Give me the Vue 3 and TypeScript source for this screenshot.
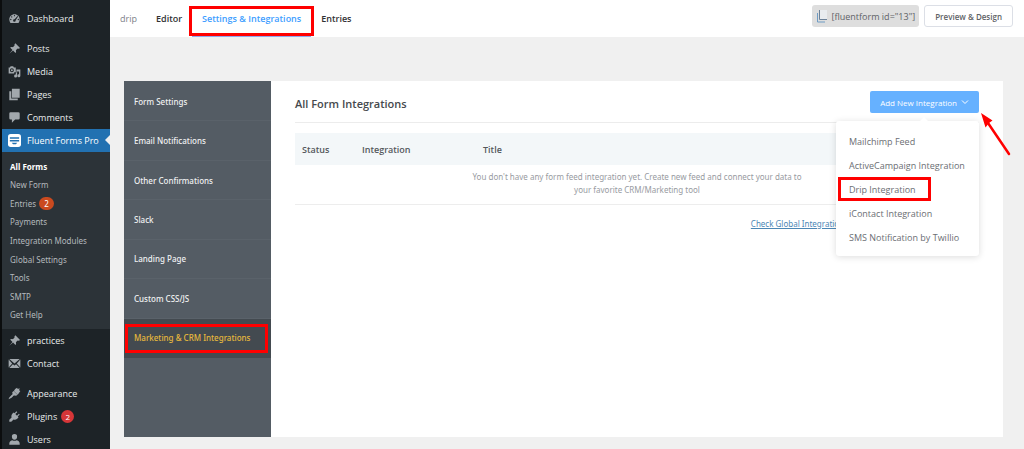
<script setup lang="ts">
import { ref } from 'vue'

interface MenuItem {
  label: string
  icon: string
  badge?: number
  spaced?: boolean
}

const topMenu: MenuItem[] = [
  { label: 'Dashboard', icon: 'dashboard' },
  { label: 'Posts', icon: 'pin', spaced: true },
  { label: 'Media', icon: 'media' },
  { label: 'Pages', icon: 'pages' },
  { label: 'Comments', icon: 'comment' },
]
const subMenu: { label: string; badge?: number }[] = [
  { label: 'All Forms' },
  { label: 'New Form' },
  { label: 'Entries', badge: 2 },
  { label: 'Payments' },
  { label: 'Integration Modules' },
  { label: 'Global Settings' },
  { label: 'Tools' },
  { label: 'SMTP' },
  { label: 'Get Help' },
]
const bottomMenu: MenuItem[] = [
  { label: 'practices', icon: 'pin' },
  { label: 'Contact', icon: 'mail' },
  { label: 'Appearance', icon: 'brush', spaced: true },
  { label: 'Plugins', icon: 'plug', badge: 2 },
  { label: 'Users', icon: 'user' },
]
const icons: Record<string, string> = {
  dashboard:
    'M3.8 17h12.4c1.2-1.6 1.8-3.4 1.8-5.4C18 7 14.5 3.500 10 3.500S2 7 2 11.600c0 2 .6 3.800 1.800 5.400zM10 4.700a1 1 0 1 1 0 2 1 1 0 0 1 0-2zM5.700 6.500a1 1 0 1 1 0 2 1 1 0 0 1 0-2zM14.600 6.300l.9.8-3.700 5.600a2 2 0 1 1-1.600-1.500zM4.300 10.500a1 1 0 1 1 0 2 1 1 0 0 1 0-2zM15.900 10.500a1 1 0 1 1 0 2 1 1 0 0 1 0-2z',
  pin: 'M10.400 3l1-1 7.100 7.100-1 1c-1.300.4-2.100.2-2.800-.2l-2.600 2.600c.6 1.800.4 3.200-.6 4.300l-3.700-3.700L2 18l4.900-5.800-3.700-3.700c1.100-1 2.500-1.200 4.300-.6L10.100 5.300c-.4-.7-.3-1.600.3-2.300z',
  media:
    'M1 4h2l1-2h4l1 2h3v7H9.500v2H1zM6 5a3 3 0 1 0 0 6 3 3 0 0 0 0-6zM6 6.500a1.500 1.500 0 1 1 0 3 1.500 1.500 0 0 1 0-3zM13 7h6v9.500a2.300 2.300 0 1 1-2-2.200V10h-3v7a2.300 2.300 0 1 1-2-2.200V12h1z',
  pages: 'M6 1h12v14H6zM2 5h3v11h10v3H2z',
  comment: 'M4 2h12q2 0 2 2v7q0 2-2 2h-5l-5 5v-5H4q-2 0-2-2V4q0-2 2-2z',
  mail: 'M2 3h16l-8 7zM1 4l5.500 6L1 16zM19 4v12l-5.500-6zM7.500 11l2.500 2 2.500-2 5.500 6H2z',
  brush:
    'M11 3l3-2 1 2 3-1-1 3 2 1-4 6-6-6zM8.500 6l6 6-2 1.500-3-.5c-2 .5-2 2-4 3.500L1 19c.5-3 2-4 3.500-5.500S7 12 7 10.500L6.500 8z',
  plug: 'M13 2l1.300 1.300-3 3 2.500 2.500 3-3L18 7l-3 3 1.200 1.200c-2 3-4.500 4.500-7.700 3.300L5 18H2v-3l3.500-3.500C4.500 8.500 6 5.800 8.800 3.800L10 5z',
  user: 'M10 1.500a4 4 0 0 1 4 4.300c0 2.500-1.800 4.700-4 4.700s-4-2.200-4-4.700a4 4 0 0 1 4-4.300zM6.500 11q3.500 2 7 0c3 .8 4.500 2.500 4.500 5.500V18H2v-1.500c0-3 1.500-4.700 4.500-5.500z',
}
const tabs = ['Editor', 'Settings & Integrations', 'Entries']
const settings = [
  'Form Settings',
  'Email Notifications',
  'Other Confirmations',
  'Slack',
  'Landing Page',
  'Custom CSS/JS',
  'Marketing & CRM Integrations',
]
const integrations = [
  'Mailchimp Feed',
  'ActiveCampaign Integration',
  'Drip Integration',
  'iContact Integration',
  'SMS Notification by Twillio',
]
const activeTab = ref(1)
const activeSetting = ref(6)
const menuOpen = ref(true)
</script>

<template>
  <div class="app">
    <aside class="sidebar">
      <nav class="menu" aria-label="Admin">
        <a v-for="m in topMenu" :key="m.label" href="#" class="item" :class="{ spaced: m.spaced }">
          <svg class="icon" viewBox="0 0 20 20" aria-hidden="true"><path :d="icons[m.icon]" fill-rule="evenodd" /></svg>
          <span>{{ m.label }}</span>
        </a>
        <a href="#" class="item current">
          <svg class="icon logo" viewBox="0 0 14 14" aria-hidden="true">
            <rect width="14" height="14" rx="3" fill="#fff" />
            <path d="M2 3.500h10v1.500H2zM2 6.500h10v1.500H2zM4 9.500h6L8.500 11h-3z" fill="#2271b1" />
          </svg>
          <span>Fluent Forms Pro</span>
        </a>
      </nav>
      <nav class="submenu" aria-label="Fluent Forms Pro">
        <a v-for="(s, i) in subMenu" :key="s.label" href="#" class="sub" :class="{ on: i === 0 }">
          {{ s.label }}<span v-if="s.badge" class="badge orange">{{ s.badge }}</span>
        </a>
      </nav>
      <nav class="menu lower" aria-label="Site">
        <a v-for="m in bottomMenu" :key="m.label" href="#" class="item" :class="{ spaced: m.spaced }">
          <svg class="icon" viewBox="0 0 20 20" aria-hidden="true"><path :d="icons[m.icon]" fill-rule="evenodd" /></svg>
          <span>{{ m.label }}</span>
          <span v-if="m.badge" class="badge red">{{ m.badge }}</span>
        </a>
      </nav>
    </aside>

    <div class="main">
      <header class="topbar">
        <span class="form-name">drip</span>
        <nav class="tabs" aria-label="Form">
          <a
            v-for="(t, i) in tabs"
            :key="t"
            href="#"
            class="tab"
            :class="{ active: i === activeTab, marked: i === 1 }"
            @click.prevent="activeTab = i"
            >{{ t }}</a
          >
        </nav>
        <button type="button" class="shortcode">
          <svg viewBox="0 0 12 14" aria-hidden="true">
            <path d="M4 1h7v9H4z" fill="#e9ecef" />
            <path d="M3.500 1v9.500H11" fill="none" stroke="#6d8299" />
            <path d="M1.500 4v9H9" fill="none" stroke="#6f9cc4" />
          </svg>
          [fluentform id="13"]
        </button>
        <button type="button" class="preview">Preview &amp; Design</button>
      </header>

      <div class="card">
        <nav class="settings" aria-label="Form settings">
          <a
            v-for="(s, i) in settings"
            :key="s"
            href="#"
            class="setting"
            :class="{ active: i === activeSetting, marked: i === 6 }"
            @click.prevent="activeSetting = i"
            >{{ s }}</a
          >
        </nav>
        <main class="content">
          <div class="head">
            <h1>All Form Integrations</h1>
            <div class="dropdown">
              <button type="button" class="add" :aria-expanded="menuOpen" @click="menuOpen = !menuOpen">
                Add New Integration
                <svg viewBox="0 0 8 8" aria-hidden="true"><path d="M1 2.500l3 3 3-3" fill="none" stroke="#fff" /></svg>
              </button>
              <div v-if="menuOpen" class="popover">
                <a v-for="(n, i) in integrations" :key="n" href="#" class="option" :class="{ marked: i === 2 }">{{ n }}</a>
              </div>
              <svg class="arrow" viewBox="0 0 32 44" aria-hidden="true">
                <path d="M30 41L9 10" stroke="#f00" stroke-width="2.500" stroke-linecap="round" />
                <path d="M2 0l11.500 7.500-3.500 2.500-3.500 4.500z" fill="#f00" />
              </svg>
            </div>
          </div>
          <table>
            <colgroup><col class="c-status" /><col class="c-name" /><col /></colgroup>
            <thead>
              <tr><th>Status</th><th>Integration</th><th>Title</th></tr>
            </thead>
            <tbody>
              <tr>
                <td colspan="3">
                  <p>You don't have any form feed integration yet. Create new feed and connect your data to your favorite CRM/Marketing tool</p>
                </td>
              </tr>
            </tbody>
          </table>
          <div class="foot"><a href="#">Check Global Integrations</a></div>
        </main>
      </div>
    </div>
  </div>
</template>

<style>
body {
  margin: 0;
  background: #f0f0f0;
}
</style>

<style scoped>
* {
  box-sizing: border-box;
}
.app {
  display: flex;
  height: 100vh;
  overflow: hidden;
  font-family: 'Open Sans', 'Noto Sans', sans-serif;
  font-size: 9px;
  color: #5f6368;
}
a {
  color: inherit;
  text-decoration: none;
}
button {
  font: inherit;
  white-space: nowrap;
  cursor: pointer;
}
.sidebar {
  flex: none;
  width: 110px;
  border-left: 2px solid #0b0d0e;
  background: #1d2327;
  color: #e8eaeb;
}
.menu {
  padding-top: 7px;
}
.menu.lower {
  padding-top: 0;
}
.item {
  position: relative;
  display: flex;
  align-items: center;
  gap: 6px;
  height: 23px;
  padding-left: 6px;
  font-weight: 500;
  white-space: nowrap;
}
.spaced {
  margin-top: 7px;
}
.icon {
  flex: none;
  width: 13px;
  height: 13px;
  fill: #a2a8ad;
}
.current {
  background: #2271b1;
  color: #fff;
}
.current::after {
  content: '';
  position: absolute;
  right: 0;
  top: 6px;
  border: 5px solid transparent;
  border-left: 0;
  border-right-color: #f0f0f0;
}
.submenu {
  display: grid;
  grid-auto-rows: 1fr;
  height: 177px;
  padding: 5px 0;
  background: #2c3338;
  color: #b4b9bd;
  font-family: 'Noto Sans', sans-serif;
  font-size: 8px;
}
.sub {
  display: flex;
  align-items: center;
  padding-left: 8px;
}
.sub.on {
  color: #fff;
  font-weight: 700;
}
.badge {
  display: inline-flex;
  align-items: center;
  justify-content: center;
  height: 13px;
  color: #fff;
  font-size: 8px;
  border-radius: 7px;
}
.orange {
  width: 15px;
  margin-left: 3px;
  background: #ca4a1f;
}
.red {
  width: 13px;
  margin-left: -2px;
  background: #d63638;
}
.main {
  flex: 1;
  min-width: 0;
}
.topbar {
  display: flex;
  align-items: center;
  height: 37px;
  padding: 0 11px 0 10px;
  background: #fff;
}
.form-name {
  width: 26px;
  color: #7d8288;
}
.tabs {
  display: flex;
  align-self: stretch;
  flex: 1;
}
.tab {
  position: relative;
  display: flex;
  align-items: center;
  padding: 0 10px;
  font-weight: 600;
  font-size: 9px;
  color: #303133;
}
.tab.active {
  color: #409eff;
  border-bottom: 1px solid #8fa8ee;
  padding-top: 1px;
}
.marked {
  position: relative;
}
.marked::after {
  content: '';
  position: absolute;
  inset: 6px -3px 0;
  border: 3px solid #f00;
}
.shortcode {
  display: flex;
  align-items: center;
  gap: 4px;
  height: 22px;
  margin-right: 5px;
  padding: 0 4px;
  border: 0;
  border-radius: 3px;
  background: #dedede;
  color: #606266;
  font-size: 9px;
  font-weight: 500;
}
.shortcode svg {
  width: 12px;
  height: 14px;
}
.preview {
  height: 22px;
  margin-top: -5px;
  padding: 0 10px;
  border: 1px solid #dcdfe6;
  border-radius: 3px;
  background: #fff;
  color: #606266;
  font-size: 8px;
  font-weight: 600;
}
.shortcode {
  margin-top: -5px;
}
.card {
  display: flex;
  min-height: 356px;
  margin: 44px 21px 0 14px;
  background: #fff;
}
.settings {
  flex: none;
  width: 147px;
  display: grid;
  grid-template-rows: repeat(7, 1fr);
  padding: 1px 0 79px;
  background: #545c64;
  color: #f0f1f2;
}
.setting {
  display: flex;
  align-items: center;
  padding-left: 10px;
  border-bottom: 1px solid #5a626a;
  font-family: 'Noto Sans', sans-serif;
  font-size: 8px;
  font-weight: 500;
  white-space: nowrap;
}
.setting.active {
  border-color: #434a50;
  background: #434a50;
  color: #e6b83c;
}
.setting.marked::after {
  inset: 5px 3px 4px 1px;
}
.content {
  flex: 1;
  min-width: 0;
  padding: 10px 24px 0;
}
.head {
  display: flex;
  align-items: center;
  justify-content: space-between;
  padding-bottom: 9px;
  border-bottom: 1px solid #ececec;
}
h1 {
  margin: 0;
  padding-top: 3px;
  font-size: 11px;
  font-weight: 600;
  color: #45494d;
}
.dropdown {
  position: relative;
}
.add {
  display: flex;
  align-items: center;
  gap: 4px;
  height: 22px;
  padding: 0 10px;
  border: 0;
  border-radius: 2px;
  background: #66b1ff;
  color: #fff;
  font-size: 8px;
  font-weight: 500;
}
.add svg {
  width: 8px;
  height: 8px;
}
.popover {
  position: absolute;
  z-index: 1;
  top: 30px;
  right: 0;
  width: 143px;
  padding: 8px 0 7px;
  border-radius: 3px;
  background: #fff;
  box-shadow: 0 1px 7px rgba(0, 0, 0, 0.14);
}
.popover::before {
  content: '';
  position: absolute;
  top: -4px;
  left: 84px;
  border: 4px solid transparent;
  border-top: 0;
  border-bottom-color: #fff;
}
.option {
  display: flex;
  align-items: center;
  height: 24px;
  padding-left: 13px;
  font-size: 9px;
  color: #6b6e73;
  white-space: nowrap;
}
.option.marked::after {
  inset: 0 48px 0 2px;
}
.arrow {
  position: absolute;
  top: 22px;
  left: 100%;
  width: 32px;
  height: 44px;
}
table {
  width: 100%;
  margin-top: 10px;
  border-collapse: collapse;
  table-layout: fixed;
}
.c-status {
  width: 60px;
}
.c-name {
  width: 121px;
}
th {
  height: 32px;
  padding: 0 7px;
  background: #f3f7f9;
  font-size: 9px;
  font-weight: 600;
  text-align: left;
  color: #54585c;
}
td {
  padding: 5px 0 8px;
  border-bottom: 1px solid #ededed;
  color: #989b9f;
  font-family: 'Noto Sans', sans-serif;
  font-size: 8px;
  line-height: 13px;
  text-align: center;
}
td p {
  max-width: 344px;
  margin: 0 auto;
}
.foot {
  display: flex;
  justify-content: flex-end;
  margin-top: 13px;
  padding-right: 131px;
  color: #4c87b5;
  font-family: 'Noto Sans', sans-serif;
  font-size: 8px;
}
.foot a {
  text-decoration: underline;
}
</style>
